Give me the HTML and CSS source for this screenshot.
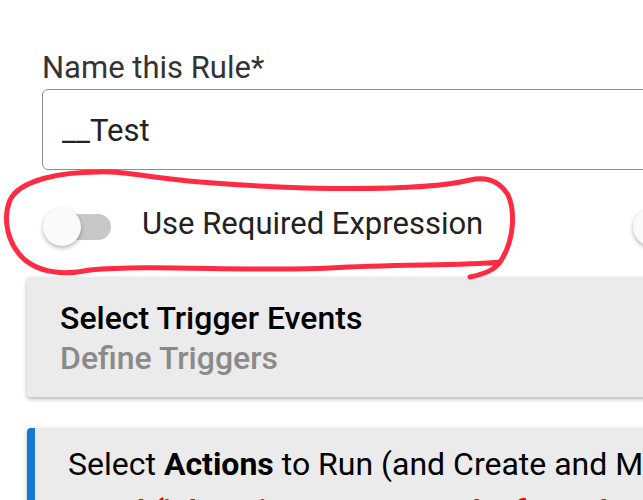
FILE: index.html
```html
<!DOCTYPE html>
<html lang="en">
<head>
    <meta charset="UTF-8">
    <meta name="viewport" content="width=device-width, initial-scale=1.0">
    <title>Rule</title>
    <link rel="stylesheet" href="styles.css">
</head>
<body>
    <div class="page">
        <div class="field">
            <label class="field-label">Name this Rule*</label>
            <div class="text-input">__Test</div>
        </div>

        <div class="switch-row">
            <span class="switch"><span class="knob"></span></span>
            <span class="switch-label">Use Required Expression</span>
            <span class="switch switch-next"><span class="knob"></span></span>
        </div>

        <div class="card">
            <div class="card-title">Select Trigger Events</div>
            <div class="card-sub">Define Triggers</div>
        </div>

        <div class="card card-active">
            <div class="card-title normal">Select <b>Actions</b> to Run (and Create and Manage Local Variables)</div>
            <div class="card-code">speak('There is someone at the front door')</div>
        </div>

        <!-- red marker loop around the switch -->
        <svg class="scribble" width="643" height="500" viewBox="0 0 643 500">
            <path d="M 98 172 C 60 172, 20 180, 10 200 C 2 220, 8 245, 25 260 C 40 272, 60 276, 90 270 C 150 264, 250 272, 330 268 C 400 264, 460 266, 500 262 C 515 240, 515 210, 508 195 C 500 182, 488 176, 470 180 C 420 192, 300 190, 200 182 C 150 178, 120 170, 98 172 M 500 262 C 495 270, 485 274, 470 277"
                  fill="none" stroke="#ff2b42" stroke-width="5" stroke-linecap="round" stroke-linejoin="round"/>
        </svg>
    </div>
</body>
</html>
```

FILE: styles.css
```css
body {
    margin: 0;
    background: #fff;
    font-family: Roboto, "Noto Sans", sans-serif;
    overflow: hidden;
}

.page {
    position: relative;
    width: 643px;
    height: 500px;
    overflow: hidden;
}

.field {
    padding: 51px 0 0 42px;
}

.field-label {
    display: block;
    font-size: 31px;
    line-height: 34px;
    color: #333;
}

.text-input {
    margin-top: 4px;
    width: 700px;
    height: 77px;
    border: 1px solid #8c8c8c;
    border-radius: 6px;
    box-sizing: content-box;
    display: flex;
    align-items: center;
    padding: 2px 0 0 19px;
    font-size: 31px;
    line-height: 34px;
    color: #222;
}

.switch-row {
    display: flex;
    align-items: center;
    height: 50px;
    margin-top: 32px;
    padding-left: 43px;
    white-space: nowrap;
}

.switch {
    position: relative;
    flex: none;
    width: 66px;
    height: 26px;
    border-radius: 13px;
    background: #c8c8c8;
    margin-left: 2px;
}

.knob {
    position: absolute;
    left: -2px;
    top: -6px;
    width: 38px;
    height: 38px;
    border-radius: 50%;
    background: #fafafa;
    box-shadow: 0 2px 4px rgba(0, 0, 0, 0.3);
}

.switch-label {
    margin-left: 31px;
    padding-bottom: 6px;
    font-size: 31px;
    line-height: 34px;
    color: #222;
}

.switch-next {
    margin-left: 152px;
    background: transparent;
}

.card {
    margin: 25px 0 0 27px;
    width: 700px;
    background: #ebebeb;
    padding: 24px 0 22px 33px;
    border-radius: 3px;
    box-shadow: 0 2px 4px rgba(0, 0, 0, 0.3);
}

.card-title {
    font-size: 32px;
    line-height: 34px;
    font-weight: 500;
    color: #000;
    white-space: nowrap;
}

.card-sub {
    margin-top: 6px;
    font-size: 32px;
    line-height: 34px;
    font-weight: 500;
    color: #8a8a8a;
}

.card-active {
    margin-top: 31px;
    padding: 19px 0 0 33px;
    border-left: 8px solid #1976d2;
    border-radius: 4px 0 0 0;
}

.card-title.normal {
    font-size: 32px;
    line-height: 35px;
    font-weight: 400;
}

.card-title b {
    font-weight: 700;
}

.card-code {
    margin-top: 12px;
    font-size: 32px;
    line-height: 35px;
    font-weight: 700;
    font-style: italic;
    color: #f00;
    white-space: nowrap;
}

.scribble {
    position: absolute;
    left: 0;
    top: 0;
    pointer-events: none;
}
```
